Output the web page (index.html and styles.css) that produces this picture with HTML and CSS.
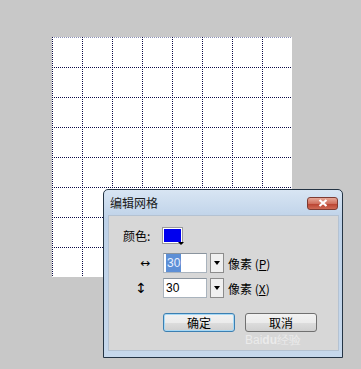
FILE: index.html
```html
<!DOCTYPE html>
<html lang="zh">
<head>
    <meta charset="UTF-8">
    <title>编辑网格</title>
    <link rel="stylesheet" href="styles.css">
</head>
<body>
    <div id="stage">
        <svg class="grid" width="240" height="240" viewBox="0 0 240 240">
            <rect width="240" height="240" fill="#fff"/>
            <g stroke="#8a90b8" stroke-dasharray="1 1">
                <line x1="0" y1="0.5" x2="240" y2="0.5"/>
            </g>
            <g stroke="#0c0c48" stroke-dasharray="1 1">
                <line x1="0.5" y1="0" x2="0.5" y2="240"/>
                <line x1="30.5" y1="0" x2="30.5" y2="240"/>
                <line x1="60.5" y1="0" x2="60.5" y2="240"/>
                <line x1="90.5" y1="0" x2="90.5" y2="240"/>
                <line x1="120.5" y1="0" x2="120.5" y2="240"/>
                <line x1="150.5" y1="0" x2="150.5" y2="240"/>
                <line x1="180.5" y1="0" x2="180.5" y2="240"/>
                <line x1="210.5" y1="0" x2="210.5" y2="240"/>
                <line x1="0" y1="30.5" x2="240" y2="30.5"/>
                <line x1="0" y1="60.5" x2="240" y2="60.5"/>
                <line x1="0" y1="90.5" x2="240" y2="90.5"/>
                <line x1="0" y1="120.5" x2="240" y2="120.5"/>
                <line x1="0" y1="150.5" x2="240" y2="150.5"/>
                <line x1="0" y1="180.5" x2="240" y2="180.5"/>
                <line x1="0" y1="210.5" x2="240" y2="210.5"/>
            </g>
        </svg>
    </div>

    <div id="dialog">
        <div class="titlebar">
            <span class="title">编辑网格</span>
            <button class="close">
                <svg width="10" height="8" viewBox="0 0 10 8">
                    <path d="M1.5 1 L8.5 7 M8.5 1 L1.5 7" stroke="#fff" stroke-width="2.2"/>
                </svg>
            </button>
        </div>
        <div class="body">
            <div class="row color-row">
                <span class="label">颜色:</span>
                <span class="swatch"><span class="tri"></span></span>
            </div>
            <div class="row">
                <span class="axis">↔</span>
                <span class="input"><span class="sel">30</span></span>
                <span class="drop"></span>
                <span class="unit">像素 (<u>P</u>)</span>
            </div>
            <div class="row row3">
                <span class="axis">↕</span>
                <span class="input">30</span>
                <span class="drop"></span>
                <span class="unit">像素 (<u>X</u>)</span>
            </div>
            <div class="buttons">
                <button class="btn ok">确定</button>
                <button class="btn">取消</button>
            </div>
            <div class="mark">Bai<b>du</b>经验</div>
        </div>
    </div>
</body>
</html>
```

FILE: styles.css
```css
body{
    margin: 0;
    background-color: #c8c8c8;
    font-family: "Noto Sans CJK SC", "Liberation Sans", sans-serif;
    font-size: 12px;
    color: #000;
    width: 361px;
    height: 369px;
    overflow: hidden;
    position: relative;
}
#stage{
    padding: 37px 0 0 52px;
}
.grid{
    display: block;
}
#dialog{
    position: absolute;
    left: 103px;
    top: 189px;
    width: 231px;
    height: 161px;
    border: 1px solid #243444;
    border-radius: 5px 5px 0 0;
    background: linear-gradient(#d8e5f3, #bdd1e8 30px, #c6d8ec);
    padding: 0 3px 6px 4px;
    box-sizing: content-box;
    display: flex;
    flex-direction: column;
}
#dialog .titlebar{
    height: 25px;
    display: flex;
    align-items: center;
    justify-content: space-between;
}
#dialog .title{
    padding-left: 2px;
    font-size: 12px;
    color: #1a1a1a;
}
#dialog .close{
    width: 31px;
    height: 13px;
    margin-right: 1px;
    margin-top: 1px;
    padding: 0;
    border: 1px solid #7d3b32;
    border-radius: 3px;
    background: linear-gradient(#e7a898, #d0705e 50%, #b8402e 51%, #cf6a55);
    display: flex;
    align-items: center;
    justify-content: center;
}
#dialog .body{
    flex: 1;
    background-color: #d7d7d7;
    border: 1px solid #b4c2d2;
    position: relative;
    padding-top: 11px;
}
.row{
    display: flex;
    align-items: center;
    height: 20px;
    margin-bottom: 5px;
}
.color-row{
    height: 16px;
    margin-bottom: 10px;
    padding-left: 14px;
}
.color-row .label{
    width: 40px;
}
.swatch{
    width: 17px;
    height: 13px;
    border: 1px solid #fff;
    outline: 1px solid #9a9a9a;
    background-color: #0000ee;
    position: relative;
}
.swatch .tri{
    position: absolute;
    right: -3px;
    bottom: -3px;
    width: 0;
    height: 0;
    border-left: 3px solid transparent;
    border-right: 3px solid transparent;
    border-top: 3px solid #000;
}
.axis{
    width: 54px;
    padding-right: 13px;
    box-sizing: border-box;
    text-align: right;
    font-family: "DejaVu Sans", sans-serif;
    font-size: 12px;
}
.row3 .axis{
    padding-right: 16px;
    font-size: 14px;
}
.input{
    width: 44px;
    height: 20px;
    box-sizing: border-box;
    background-color: #fff;
    border: 1px solid #a9b3bd;
    border-top-color: #8a949e;
    font-family: "Liberation Sans", sans-serif;
    font-size: 12px;
    line-height: 18px;
    padding-left: 2px;
}
.input .sel{
    background-color: #5d8fd6;
    color: #e8f0ff;
    padding: 2px 1px;
}
.drop{
    width: 14px;
    height: 20px;
    box-sizing: border-box;
    margin-left: 3px;
    border: 1px solid #8c8c8c;
    background-color: #f0f0f0;
    position: relative;
}
.drop::after{
    content: "";
    position: absolute;
    left: 3px;
    top: 7px;
    border-left: 3.5px solid transparent;
    border-right: 3.5px solid transparent;
    border-top: 4px solid #000;
}
.unit{
    margin-left: 4px;
}
.unit u{
    text-underline-offset: 1px;
}
.buttons{
    display: flex;
    gap: 10px;
    padding-left: 54px;
    margin-top: 15px;
}
.btn{
    width: 72px;
    height: 19px;
    padding: 0;
    border: 1px solid #707070;
    border-radius: 3px;
    background: linear-gradient(#f2f2f2, #ebebeb 50%, #dddddd 51%, #cfcfcf);
    font-family: "Noto Sans CJK SC", sans-serif;
    font-size: 12px;
    line-height: 16px;
    color: #000;
}
.btn.ok{
    border-color: #3c7fb1;
    box-shadow: inset 0 0 0 1px #a6d8f5;
}
.mark{
    position: absolute;
    left: 136px;
    top: 118px;
    font-family: "Liberation Sans", sans-serif;
    font-size: 12px;
    line-height: 12px;
    color: rgba(255,255,255,0.5);
}
```
